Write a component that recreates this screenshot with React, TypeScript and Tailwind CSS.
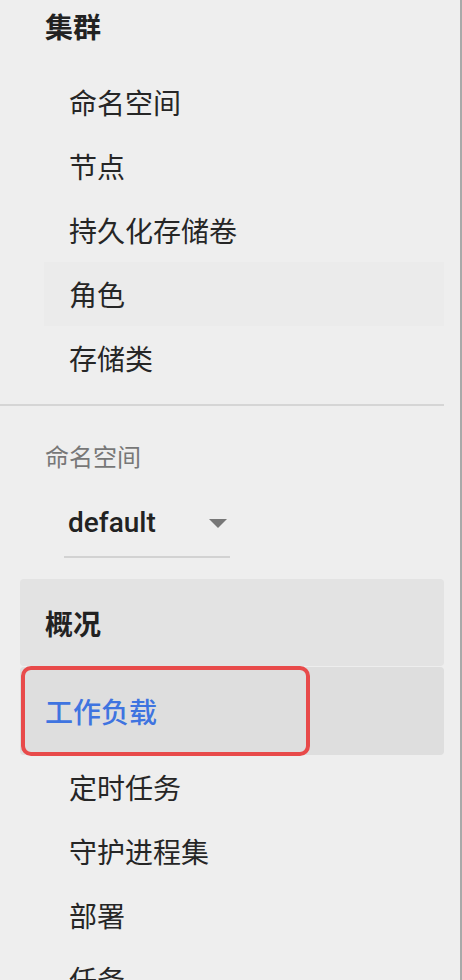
const cjk = { fontFamily: '"Noto Sans CJK SC", "Noto Sans", sans-serif' };

const clusterItems = ["命名空间", "节点", "持久化存储卷", "角色", "存储类"];
const workloadItems = ["定时任务", "守护进程集", "部署", "任务", "容器组"];

function NavItem({ label, hover }: { label: string; hover?: boolean }) {
  return (
    <div
      className={`ml-[44px] mr-[16px] flex h-[64px] items-center pl-[25px] text-[28px] text-[#262626] ${
        hover ? "bg-[#ebebeb]" : ""
      }`}
    >
      {label}
    </div>
  );
}

export default function App() {
  return (
    <div className="h-[980px] w-full overflow-hidden bg-[#eeeeee]" style={cjk}>
      <div className="h-full w-[462px] border-r-2 border-[#a9a9a9]">
        <div className="flex h-[52px] items-center pl-[45px] text-[28px] font-bold text-[#222]">
          集群
        </div>

        <div className="mt-[18px]">
          {clusterItems.map((item) => (
            <NavItem key={item} label={item} hover={item === "角色"} />
          ))}
        </div>

        <div className="mr-[16px] mt-[14px] h-[2px] bg-[#d5d5d5]" />

        <div className="mt-[34px] flex h-[32px] items-center pl-[45px] text-[24px] text-[#777]">
          命名空间
        </div>

        <div className="ml-[64px] mt-[27px] w-[166px] border-b-2 border-[#d2d2d2] pb-[9px]">
          <div className="flex h-[48px] items-center justify-between pl-[4px] pr-[3px]">
            <span
              className="text-[28px] font-medium text-[#222]"
              style={{ fontFamily: "Roboto, sans-serif" }}
            >
              default
            </span>
            <span className="h-0 w-0 border-x-[9.5px] border-t-[9px] border-x-transparent border-t-[#777]" />
          </div>
        </div>

        <div className="ml-[20px] mr-[16px] mt-[21px]">
          <div className="flex h-[87px] items-center rounded-[4px] bg-[#e3e3e3] pl-[25px] text-[28px] font-bold text-[#222]">
            概况
          </div>
          <div className="relative mt-[1px] flex h-[88px] items-center rounded-[4px] bg-[#dedede] pl-[25px] text-[28px] font-medium text-[#3f74e0]">
            工作负载
            <div className="absolute left-[1px] top-[-1px] h-[90px] w-[289px] rounded-[10px] border-4 border-[#e84a4a]" />
          </div>
        </div>

        <div>
          {workloadItems.map((item) => (
            <NavItem key={item} label={item} />
          ))}
        </div>
      </div>
    </div>
  );
}
